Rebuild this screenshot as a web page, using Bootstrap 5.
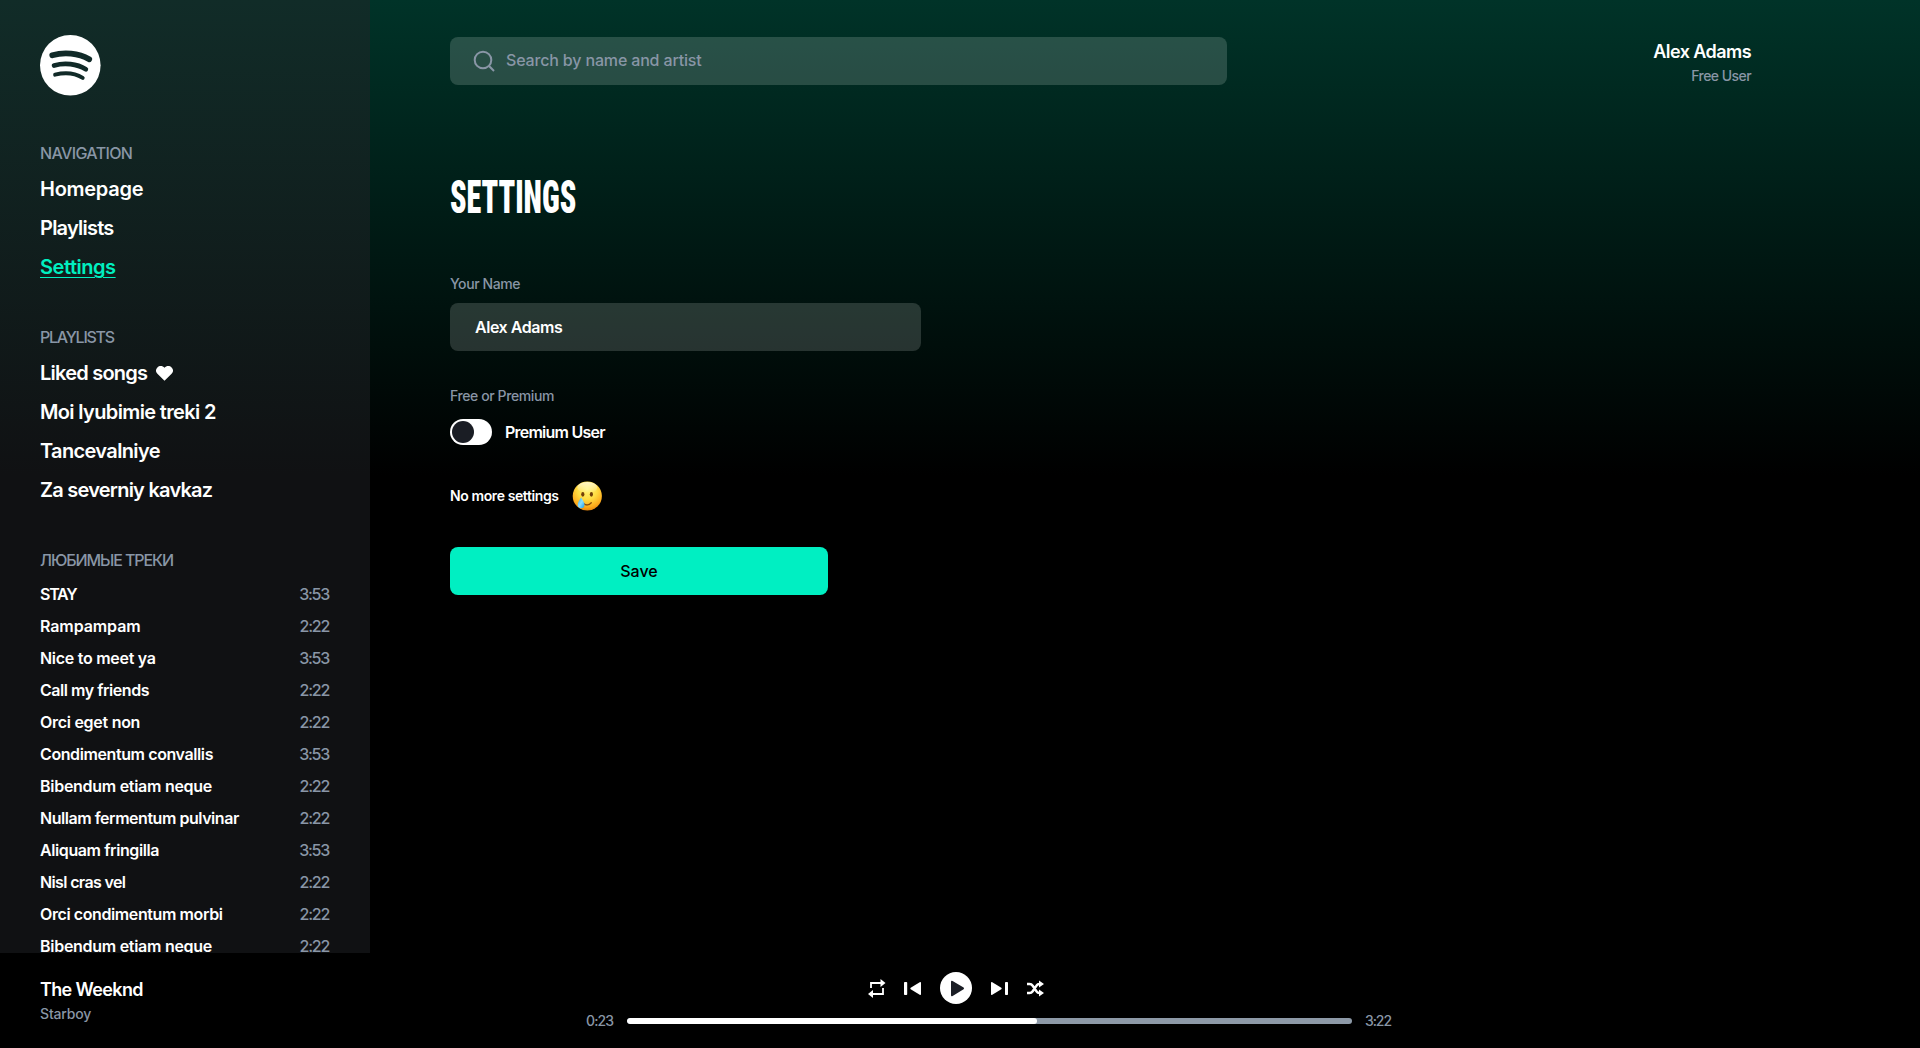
<!DOCTYPE html>
<html lang="en">
<head>
<meta charset="utf-8">
<meta name="viewport" content="width=device-width, initial-scale=1">
<title>Settings</title>
<link href="https://cdn.jsdelivr.net/npm/bootstrap@5.3.0/dist/css/bootstrap.min.css" rel="stylesheet">
<style>
body{font-family:Inter,"Noto Sans",sans-serif;font-size:16px;line-height:24px;background:#000;color:#fff;font-weight:500}
.shell{background:linear-gradient(180deg,#003328 0,#000 475px)}
.side{width:370px;padding:35px 40px 0;background:linear-gradient(180deg,#112c28 0,#101113 475px)}
.logo{margin-bottom:45px}
.muted{color:#8996a6}
.block-nav{margin-bottom:38px}
.side-title{margin-bottom:5px}
.side-link{height:39px;line-height:39px;font-size:20px;font-weight:600;color:#fff;text-decoration:none}
.side-link.current{color:#00efc0}
.current span{text-decoration:underline;text-decoration-thickness:1px;text-underline-offset:3px}
.heart{margin-left:9px}
.songs{margin-top:6px}
.song{height:32px;line-height:32px}
.song span:first-child{font-weight:600}
.song .muted{margin-right:1px}
.semi{font-weight:600}
.t0{letter-spacing:-.1px}.t1{letter-spacing:-.16px}.t2{letter-spacing:-.28px}.t3{letter-spacing:-.4px}.t4{letter-spacing:-.46px}.t5{letter-spacing:-.56px}.t6{letter-spacing:-.64px}.t7{letter-spacing:-.77px}.t8{letter-spacing:-.9px}.t10{letter-spacing:-1.08px}.t11{letter-spacing:-1.25px}
.main-area{padding:37px 169px 0 80px}
.search{width:777px;height:48px;border-radius:8px;background:rgba(240,255,248,.165);padding:0 23px}
.search svg{margin-right:10px}
.search span{padding-bottom:2px}
.who{line-height:24px;padding-top:3px;font-size:18px}
.fs14{font-size:14px}
.heading{font:900 46.5px/56px Roboto,sans-serif;font-stretch:75%;transform:scaleX(.647);transform-origin:0 50%;margin:81px 0 0;width:max-content}
.lbl{margin-top:47px;line-height:24px}
.field{width:471px;height:48px;line-height:48px;border-radius:8px;background:rgba(245,255,250,.16);padding:0 25px;margin-top:7px}
.lbl2{margin-top:33px}
.premium{margin-top:11px}
.premium span{margin-left:13px}
.toggle{width:42px;height:26px;border-radius:13px;background:#fff;padding:2px}
.knob{width:22px;height:22px;border-radius:50%;background:#1a1d24}
.no-more{margin-top:31px}
.save{width:378px;height:48px;border-radius:8px;background:#00efc2;color:#000;margin-top:31px;font-weight:500;border:0;padding:0}
.player{height:95px}
.track{width:370px;padding:25px 40px 0}
.artist{font-size:18px}
.controls{left:586px;width:820px;top:19px}
.rail{width:725px;height:6px;border-radius:3px;background:#8d99a7}
.rail .progress-bar{background:#fff;border-radius:3px}
.elapsed{width:41px}
.total{margin-left:13px}
.buttons{height:32px;margin-bottom:5px;padding-left:282px}
</style>
<script src="https://cdn.jsdelivr.net/npm/bootstrap@5.3.0/dist/js/bootstrap.bundle.min.js"></script>
</head>
<body class="vh-100 overflow-hidden d-flex flex-column">
<div class="shell d-flex flex-grow-1 overflow-hidden">
  <aside class="side flex-shrink-0 overflow-hidden">
    <svg class="logo d-block" width="61" height="61" viewBox="0 0 61 61"><circle cx="30.3" cy="30.3" r="30.3" fill="#fff"/><g fill="none" stroke="#112a28" stroke-linecap="round"><path d="M12.3 20.3C24 16.8 38.5 18 49.2 24.3" stroke-width="5.8"/><path d="M14.2 30.5C24.5 27.5 36.8 28.8 45.8 34.2" stroke-width="4.8"/><path d="M15.1 39.7C24.5 37.4 34.8 38 42.7 42.9" stroke-width="3.9"/></g></svg>
    <nav class="block-nav">
      <div class="side-title muted t6">NAVIGATION</div>
      <a class="side-link d-block t2">Homepage</a>
      <a class="side-link d-block t7">Playlists</a>
      <a class="side-link current d-block t4"><span>Settings</span></a>
    </nav>
    <nav class="block-nav">
      <div class="side-title muted t11">PLAYLISTS</div>
      <a class="side-link d-flex align-items-center t7">Liked songs<svg class="heart" width="17" height="15" viewBox="0 0 17 15"><path fill="#fff" d="M8.5 14.7 1.4 7.7A4.5 4.5 0 0 1 1.4 1.5C3.4-.5 6.6-.4 8.5 1.8 10.4-.4 13.6-.5 15.6 1.5A4.5 4.5 0 0 1 15.6 7.7Z"/></svg></a>
      <a class="side-link d-block t6">Moi lyubimie treki 2</a>
      <a class="side-link d-block t6">Tancevalniye</a>
      <a class="side-link d-block t7">Za severniy kavkaz</a>
    </nav>
    <div class="muted t10">ЛЮБИМЫЕ ТРЕКИ</div>
    <div class="songs">
      <div class="song d-flex justify-content-between"><span class="t11">STAY</span><span class="muted t11">3:53</span></div>
      <div class="song d-flex justify-content-between"><span class="t0">Rampampam</span><span class="muted t11">2:22</span></div>
      <div class="song d-flex justify-content-between"><span class="t2">Nice to meet ya</span><span class="muted t11">3:53</span></div>
      <div class="song d-flex justify-content-between"><span class="t4">Call my friends</span><span class="muted t11">2:22</span></div>
      <div class="song d-flex justify-content-between"><span class="t2">Orci eget non</span><span class="muted t11">2:22</span></div>
      <div class="song d-flex justify-content-between"><span class="t3">Condimentum convallis</span><span class="muted t11">3:53</span></div>
      <div class="song d-flex justify-content-between"><span class="t2">Bibendum etiam neque</span><span class="muted t11">2:22</span></div>
      <div class="song d-flex justify-content-between"><span class="t4">Nullam fermentum pulvinar</span><span class="muted t11">2:22</span></div>
      <div class="song d-flex justify-content-between"><span class="t3">Aliquam fringilla</span><span class="muted t11">3:53</span></div>
      <div class="song d-flex justify-content-between"><span class="t6">Nisl cras vel</span><span class="muted t11">2:22</span></div>
      <div class="song d-flex justify-content-between"><span class="t3">Orci condimentum morbi</span><span class="muted t11">2:22</span></div>
      <div class="song d-flex justify-content-between"><span class="t2">Bibendum etiam neque</span><span class="muted t11">2:22</span></div>
    </div>
  </aside>
  <main class="main-area flex-grow-1">
    <header class="d-flex justify-content-between">
      <div class="search d-flex align-items-center muted"><svg width="23" height="23" viewBox="0 0 23 23" fill="none" stroke="#8996a6" stroke-width="2"><circle cx="10" cy="10" r="8.3"/><path d="m15.8 15.8 5.2 5.2"/></svg><span class="t1">Search by name and artist</span></div>
      <div class="who text-end"><div class="semi t5">Alex Adams</div><div class="fs14 muted t5">Free User</div></div>
    </header>
    <h1 class="heading">SETTINGS</h1>
    <div class="lbl fs14 muted t3">Your Name</div>
    <div class="field semi t4">Alex Adams</div>
    <div class="lbl lbl2 fs14 muted t3">Free or Premium</div>
    <div class="premium d-flex align-items-center"><div class="toggle"><div class="knob"></div></div><span class="semi t7">Premium User</span></div>
    <div class="no-more d-flex align-items-center"><span class="semi fs14 t3">No more settings</span>
      <svg class="ms-2" width="40" height="40" viewBox="0 0 40 40"><defs><radialGradient id="face" cx=".5" cy=".28" r=".75"><stop offset="0" stop-color="#fff47a"/><stop offset=".45" stop-color="#ffdc42"/><stop offset=".8" stop-color="#fdaa1c"/><stop offset="1" stop-color="#e07c08"/></radialGradient><linearGradient id="shine" x2="0" y2="1"><stop offset="0" stop-color="#fff" stop-opacity=".7"/><stop offset="1" stop-color="#fff" stop-opacity="0"/></linearGradient><linearGradient id="tear" x2="1" y2="1"><stop offset="0" stop-color="#2ba4f2"/><stop offset=".5" stop-color="#8be0ff"/><stop offset="1" stop-color="#179af0"/></linearGradient></defs><circle cx="20.300" cy="20" r="14.6" fill="url(#face)"/><ellipse cx="20.300" cy="11.5" rx="10" ry="5.5" fill="url(#shine)"/><ellipse cx="15.8" cy="18.3" rx="1.6" ry="2.4" fill="#73400a"/><ellipse cx="24.4" cy="18.3" rx="1.6" ry="2.4" fill="#73400a"/><path d="M16.3 27.2q4.2 3.8 8-.5" stroke="#8a4b0b" stroke-width="1.3" fill="none" stroke-linecap="round"/><path d="M14.1 21.5c2.4 3.6 3.4 5.3 3.4 7.3a3.4 3.4 0 0 1-6.8 0c0-2 1.4-4.1 3.4-7.3Z" fill="url(#tear)"/></svg></div>
    <button class="save d-block">Save</button>
  </main>
</div>
<footer class="player flex-shrink-0 position-relative bg-black">
  <div class="track"><div class="artist semi t6">The Weeknd</div><div class="fs14 muted t1">Starboy</div></div>
  <div class="controls position-absolute">
    <div class="buttons d-flex align-items-center">
      <svg width="140" height="32" viewBox="868 972 140 32" fill="#fff"><g fill="none" stroke="#fff" stroke-width="1.8"><path d="M871 988v-5h11M883 988v6h-12"/></g><path d="m880.5 979 5 4-5 4ZM873 990l-5 4 5 4Z"/><rect x="904" y="982" width="3.2" height="13" rx=".8"/><path d="M921 983v11q0 1.500-1.300.8l-9-5.500q-.9-.8 0-1.600l9-5.500q1.300-.7 1.300.8Z"/><circle cx="956" cy="988" r="16"/><path d="M951 982v13q0 1.800 1.600.9l11-6.700q1-.8 0-1.600l-11-6.500q-1.600-.9-1.600.9Z" fill="#1a1d24"/><path d="M991 983v11q0 1.500 1.300.8l9-5.500q.9-.8 0-1.600l-9-5.500q-1.300-.7-1.300.8Z"/><rect x="1005" y="982" width="3" height="13" rx=".8"/></svg>
      <svg class="ms-3" width="24" height="32" viewBox="1024 972 24 32" fill="#fff"><path d="M1027 984h2.500q2 0 3.200 1.700l3.800 5.600q1 1.700 3 1.700h1M1027 993h2.500q2 0 3.200-1.700l3.800-5.600q1-1.700 3-1.700h1" fill="none" stroke="#fff" stroke-width="2.500"/><path d="m1039 980.500 5 3.500-5 3.500ZM1039 989.500l5 3.500-5 3.500Z"/></svg>
    </div>
    <div class="d-flex align-items-center fs14 muted"><span class="elapsed t8">0:23</span><div class="progress rail"><div class="progress-bar" style="width:56.6%"></div></div><span class="total t10">3:22</span></div>
  </div>
</footer>
</body>
</html>
